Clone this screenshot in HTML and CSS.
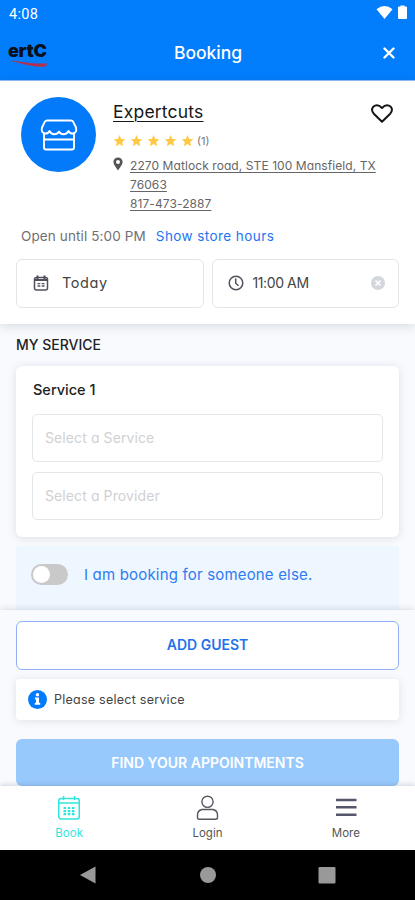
FILE: index.html
```html
<!DOCTYPE html>
<html lang="en">
<head>
<meta charset="utf-8">
<meta name="viewport" content="width=device-width, initial-scale=1">
<title>Booking</title>
<link rel="stylesheet" href="styles.css">
</head>
<body>
<div class="app">
  <div class="statusbar">
    <span class="clock">4:08</span>
    <svg class="status-icons" width="32" height="16" viewBox="0 0 32 16" fill="#fff"><path d="M0.500 4.200 Q8.500 -2 16.500 4.200 L8.500 14 Z"/><path d="M24.500 1.500 V0.500 h4 v1 h1.500 q1 0 1 1 v10.500 q0 1 -1 1 h-7 q-1 0 -1 -1 v-10.500 q0 -1 1 -1 z"/></svg>
  </div>
  <header class="header">
    <div class="logo"><span>ertC</span><svg width="40" height="8" viewBox="0 0 40 8" fill="#b5304f"><path d="M1 .5 C12 1 22 4 39 3.500 L38 6.500 C24 8 14 3 1 .5Z"/></svg></div>
    <h1>Booking</h1>
    <svg class="close" width="12" height="12" viewBox="0 0 12 12" stroke="#fff" stroke-width="2.400" stroke-linecap="round"><path d="M1.500 1.500 10.500 10.500M10.500 1.500 1.500 10.500"/></svg>
  </header>

  <section class="store">
    <div class="store-main">
      <div class="avatar">
        <svg width="38" height="34" viewBox="0 0 38 34" fill="none" stroke="#fff" stroke-width="1.900" stroke-linejoin="round" stroke-linecap="round"><path d="M7 2.500H31Q32.500 2.500 33.200 3.800L36 9.500Q37.200 14.800 33 15.500Q30 16 28.500 13Q27 16.200 23.700 16.200Q20.500 16.200 19 13.500Q17.500 16.200 14.300 16.200Q11 16.200 9.500 13Q8 16 5 15.500Q.8 14.800 2 9.500L4.800 3.800Q5.500 2.500 7 2.500Z"/><path d="M4 15.500V29.500Q4 31.500 6 31.500H32Q34 31.500 34 29.500V15.500M4 21.500H34"/></svg>
      </div>
      <div class="details">
        <div class="name-row"><a class="name">Expertcuts</a>
          <svg width="22" height="19" viewBox="0 0 22 19" fill="none" stroke="#151515" stroke-width="2" stroke-linejoin="round"><path d="M11 17.800 2.800 9.700Q-.4 5.700 2.200 2.800Q6.500 -.8 11 4Q15.500 -.8 19.800 2.800Q22.400 5.700 19.200 9.700Z"/></svg>
        </div>
        <div class="rating">
          <svg width="82" height="14" viewBox="0 0 82 14" fill="#ffc845"><defs><path id="star" d="M6.500 1 8.200 4.900 12.300 5.300 9.200 8 10.100 12.200 6.500 10 2.900 12.200 3.800 8 .7 5.300 4.800 4.900Z"/></defs><use href="#star"/><use href="#star" x="17"/><use href="#star" x="34"/><use href="#star" x="51"/><use href="#star" x="68"/></svg>
          <span>(1)</span>
        </div>
        <div class="contact">
          <svg width="10" height="14" viewBox="0 0 10 14" fill="#555"><path fill-rule="evenodd" d="M5 .5a4.600 4.600 0 0 1 4.600 4.600C9.600 8 6.500 11 5 13.500 3.500 11 .4 8 .4 5.100A4.600 4.600 0 0 1 5 .5ZM5 3a2 2 0 1 0 0 4 2 2 0 0 0 0-4Z"/></svg>
          <div class="address"><a class="line1">2270 Matlock road, STE 100 Mansfield, TX</a><a class="zip">76063</a><a class="phone">817-473-2887</a></div>
        </div>
      </div>
    </div>
    <div class="hours"><span>Open until 5:00 PM</span><a>Show store hours</a></div>
    <div class="when">
      <div class="field date">
        <svg width="16" height="16" viewBox="0 0 16 16" fill="none" stroke="#50515c" stroke-width="1.500"><rect x="1.500" y="2.500" width="13" height="12.500" rx="2"/><path d="M1.500 5H14.500M4.500 .5V4M11.500 .5V4" stroke-width="2"/><path d="M4.500 8.700h2.800M8.700 8.700h2.800M4.500 11h2.800M8.700 11h2.800" stroke-width="1.300"/></svg>
        <span>Today</span>
      </div>
      <div class="field time">
        <svg width="16" height="16" viewBox="0 0 16 16" fill="none" stroke="#50515c" stroke-width="1.500" stroke-linecap="round"><circle cx="8" cy="8" r="6.800"/><path d="M7.700 4V8.200L10 10.200"/></svg>
        <span>11:00 AM</span>
        <svg class="clear" width="14" height="14" viewBox="0 0 14 14"><circle cx="7" cy="7" r="7" fill="#d3d6da"/><path d="M4.500 4.500 9.500 9.500M9.500 4.500 4.500 9.500" stroke="#fff" stroke-width="1.700"/></svg>
      </div>
    </div>
  </section>

  <main class="content">
    <h2>MY SERVICE</h2>
    <div class="service">
      <h3>Service 1</h3>
      <div class="select"><span>Select a Service</span></div>
      <div class="select"><span>Select a Provider</span></div>
    </div>
    <div class="someone"><span class="toggle"></span><span class="label">I am booking for someone else.</span></div>
  </main>

  <section class="actions">
    <button class="guest"><span>ADD GUEST</span></button>
    <div class="notice">
      <svg width="19" height="19" viewBox="0 0 19 19"><circle cx="9.500" cy="9.500" r="9.500" fill="#027afd"/><circle cx="9.500" cy="4.700" r="1.700" fill="#fff"/><path d="M7 7.500H11V12.700H12.200V14.700H6.800V12.700H8V9.500H7Z" fill="#fff"/></svg>
      <span>Please select service</span>
    </div>
    <button class="find"><span>FIND YOUR APPOINTMENTS</span></button>
  </section>

  <nav class="tabs">
    <a class="tab active">
      <svg width="24" height="26" viewBox="0 0 24 26" fill="none" stroke="#30e5dc" stroke-width="1.500"><rect x="1.750" y="3.500" width="20.500" height="20.500" rx="2.500"/><path d="M2 8H22M6.500 1V5M17.500 1V5"/><path d="M6.500 13h11M6.500 16.200h11M6.500 19.200h11" stroke-width="2.200" stroke-dasharray="2.600 1.600"/></svg>
      <span>Book</span>
    </a>
    <a class="tab login">
      <svg width="24" height="26" viewBox="0 0 24 26" fill="none" stroke="#555761" stroke-width="1.400"><circle cx="12.500" cy="6.800" r="5.600"/><path d="M7 14.500H18Q22.500 15.500 22.500 20V22.500Q22.500 24.300 20.500 24.300H4.500Q2.500 24.300 2.500 22.500V20Q2.500 15.500 7 14.500Z"/></svg>
      <span>Login</span>
    </a>
    <a class="tab more">
      <svg width="24" height="26" viewBox="0 0 24 26" fill="none" stroke="#55566a" stroke-width="2.600"><path d="M2 5H22.500M2 12.200H22.500M2 19.700H22.500"/></svg>
      <span>More</span>
    </a>
  </nav>
  <div class="android">
    <svg width="18" height="18" viewBox="0 0 18 18" fill="#999"><path d="M0 9 15.500 .5V17.500Z"/></svg>
    <svg width="18" height="18" viewBox="0 0 18 18" fill="#999"><circle cx="9" cy="9" r="8"/></svg>
    <svg width="18" height="18" viewBox="0 0 18 18" fill="#999"><rect x=".5" y="1" width="17" height="16.500" rx="1"/></svg>
  </div>
</div>
</body>
</html>
```
FILE: styles.css
```css
* { box-sizing: border-box; }
body {
  margin: 0;
  font-family: Inter, "Open Sans", sans-serif;
  font-feature-settings: "cv11";
  color: #222;
}
h1, h2, h3 { margin: 0; font-weight: 500; }
svg { display: block; flex: none; }
span, a { white-space: nowrap; }
button { font-family: inherit; font-feature-settings: inherit; padding: 0; }

.app {
  width: 415px;
  height: 900px;
  display: flex;
  flex-direction: column;
  overflow: hidden;
  background: #f8fafe;
}
.statusbar {
  height: 28px;
  flex: none;
  background: #027dfc;
  color: #fff;
  display: flex;
  justify-content: space-between;
  align-items: center;
  padding: 0 7px 0 9px;
}
.clock { font: 14.5px/28px Roboto, sans-serif; letter-spacing: .3px; padding-top: 1px; }
.status-icons { margin-top: -2px; }
.header {
  height: 53px;
  flex: none;
  background: #027dfc;
  border-bottom: 1px solid #8fc2f7;
  color: #fff;
  display: grid;
  grid-template-columns: 60px 1fr 60px;
  align-items: center;
  padding: 0 20px 3px 8px;
}
.logo { height: 27px; width: 42px; margin-top: 5px; }
.logo span {
  display: block;
  font: 900 18px/18px Inter, sans-serif;
  color: #07101c;
  letter-spacing: -.3px;
}
.header h1 { font-size: 17.5px; text-align: center; margin-left: 13px; }
.close { justify-self: end; }

.store {
  height: 243px;
  flex: none;
  position: relative;
  background: #fff;
  padding: 16px 16px 0;
  box-shadow: 0 2px 10px rgba(40, 50, 70, .16);
}
.store-main { display: flex; height: 130px; padding-left: 5px; }
.avatar {
  width: 75px;
  height: 75px;
  flex: none;
  border-radius: 50%;
  background: #027afa;
  display: flex;
  align-items: center;
  justify-content: center;
}
.details { flex: 1; padding-left: 17px; }
.name-row { display: flex; justify-content: space-between; height: 30px; padding: 3px 6px 0 0; }
.name-row svg { margin-top: 4px; }
.name { font-size: 17.5px; line-height: 24px; letter-spacing: .2px; text-decoration: underline; text-decoration-thickness: 1px; text-underline-offset: 3px; color: #171717; }
.rating { display: flex; height: 28px; align-items: center; font-size: 11px; color: #777; gap: 2px; }
.contact { display: flex; gap: 7px; }
.contact svg { margin: 2px 0 0; }
.address { display: flex; flex-direction: column; align-items: flex-start; font-size: 12px; line-height: 19px; letter-spacing: .08px; color: #666; padding-top: 1px; }
.address a { text-decoration: underline; text-underline-offset: 2px; }
.hours { display: flex; gap: 10px; height: 18px; padding-left: 5px; font-size: 13.5px; line-height: 18px; margin-bottom: 14px; }
.hours span { color: #717171; letter-spacing: .12px; }
.hours a { color: #1e74f2; letter-spacing: .42px; }
.when { display: grid; grid-template-columns: 1fr 1fr; gap: 8px; }
.field {
  height: 49px;
  border: 1px solid #e3e6e9;
  border-radius: 6px;
  display: flex;
  align-items: center;
  padding: 0 13px 2px 16px;
  font-size: 14.5px;
  color: #444;
}
.date span { margin-left: 13px; letter-spacing: .6px; }
.time { padding-left: 15px; }
.time span { margin-left: 9px; font-size: 14px; letter-spacing: -.4px; }
.clear { margin-left: auto; }

.content { height: 286px; flex: none; padding: 12px 16px 0; }
.content h2 { font-size: 14px; line-height: 18px; margin-bottom: 12px; }
.service {
  height: 171px;
  background: #fff;
  border-radius: 6px;
  box-shadow: 0 1px 8px rgba(50, 60, 70, .15);
  padding: 14px 16px 0;
}
.service h3 { font-size: 14.5px; line-height: 20px; margin-bottom: 14px; padding-left: 1px; }
.select {
  height: 48px;
  border: 1px solid #e3e7e9;
  border-radius: 5px;
  margin-bottom: 10px;
  padding-left: 12px;
  line-height: 46px;
  font-size: 14px;
  letter-spacing: .1px;
  color: #d0d1d3;
}
.someone {
  height: 65px;
  margin-top: 9px;
  background: #eef6ff;
  display: flex;
  align-items: center;
  padding: 0 15px 9px;
}
.toggle {
  width: 37px;
  height: 21px;
  border-radius: 11px;
  background: #c9c9c9;
  padding: 2px;
}
.toggle::before { content: ""; display: block; width: 17px; height: 17px; border-radius: 50%; background: #fff; }
.label { margin-left: 16px; font-size: 15px; letter-spacing: .18px; color: #2e7cf0; }

.actions {
  position: relative;
  height: 176px;
  flex: none;
  background: #f8fafe;
  padding: 11px 16px 0;
  box-shadow: 0 -1px 6px rgba(40, 50, 70, .15);
}
.guest, .find { display: block; width: 100%; height: 49px; border-radius: 6px; font-size: 14px; font-weight: 600; }
.guest { border: 1px solid #91b0f8; background: #fff; color: #1e73ed; padding-bottom: 2px; }
.notice {
  height: 41px;
  margin: 9px 0 19px;
  background: #fff;
  border-radius: 4px;
  box-shadow: 0 1px 8px rgba(50, 60, 70, .13);
  display: flex;
  align-items: center;
  gap: 7px;
  padding-left: 12px;
  font-size: 12.5px;
  letter-spacing: .25px;
  color: #444;
}
.find { border: 0; height: 47px; background: #98c9fc; color: #fff; }

.tabs {
  position: relative;
  height: 64px;
  flex: none;
  background: #fff;
  display: grid;
  grid-template-columns: repeat(3, 1fr);
  box-shadow: 0 -1px 5px rgba(40, 50, 70, .2);
}
.tab { display: flex; flex-direction: column; align-items: center; padding-top: 9px; font-size: 11.5px; line-height: 16px; color: #555; }
.tab span { margin-top: 4px; }
.active { color: #35e5dc; }
.android {
  height: 50px;
  flex: none;
  background: #000;
  display: grid;
  grid-template-columns: 119px 119px 119px;
  justify-content: center;
  justify-items: center;
  align-items: center;
}
```
